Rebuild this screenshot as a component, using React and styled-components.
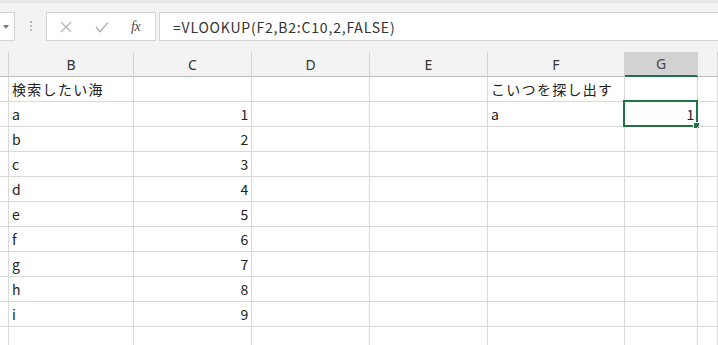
import React from 'react';
import styled, { createGlobalStyle } from 'styled-components';

const GlobalStyle = createGlobalStyle`
  html, body {
    margin: 0;
    padding: 0;
    background: #ffffff;
    overflow: hidden;
  }
  body {
    font-family: "Noto Sans CJK JP", "Noto Sans", sans-serif;
  }
`;

const Page = styled.div`
  width: 718px;
  height: 345px;
  overflow: hidden;
  background: #ffffff;
`;

const Toolbar = styled.div`
  height: 52px;
  box-sizing: border-box;
  background: #f3f3f3;
  border-top: 3px solid #e6e6e6;
  padding-top: 9px;
  display: flex;
  align-items: flex-start;
`;

const NameBox = styled.div`
  width: 15px;
  height: 29px;
  box-sizing: border-box;
  background: #ffffff;
  border: 1px solid #d4d4d4;
  border-left: none;
  display: flex;
  align-items: center;
  padding-left: 3px;
`;

const Arrow = styled.div`
  width: 0;
  height: 0;
  border-left: 3px solid transparent;
  border-right: 3px solid transparent;
  border-top: 4px solid #7a7a7a;
`;

const Grip = styled.div`
  margin: 9px 14px 0 15px;
  display: flex;
  flex-direction: column;
  gap: 2px;

  span {
    width: 2px;
    height: 2px;
    background: #b8b8b8;
  }
`;

const FxButtons = styled.div`
  width: 110px;
  height: 29px;
  box-sizing: border-box;
  background: #ffffff;
  border: 1px solid #d4d4d4;
  display: flex;
  align-items: center;
  padding-left: 13px;
  gap: 23px;
`;

const FxLabel = styled.span`
  font-family: "Liberation Serif", serif;
  font-style: italic;
  font-size: 14px;
  color: #4a4a4a;
  letter-spacing: -0.5px;
  margin-left: -1px;
`;

const FormulaBox = styled.div`
  flex: 1;
  margin-left: 3px;
  height: 29px;
  box-sizing: border-box;
  background: #ffffff;
  border: 1px solid #d4d4d4;
  border-right: none;
  padding-left: 13px;
  display: flex;
  align-items: center;
  font-size: 14px;
  letter-spacing: 0.8px;
  color: #333333;
`;

const Sheet = styled.div`
  display: grid;
  grid-template-columns: 9px 125px 118px 118px 118px 137px 73px 1fr;
  grid-auto-rows: 25px;
  font-size: 14px;
  color: #222222;
`;

const HeaderCell = styled.div`
  box-sizing: border-box;
  background: ${p => (p.$selected ? '#d2d2d2' : '#f3f3f3')};
  border-right: 1px solid #d4d4d4;
  border-bottom: ${p => (p.$selected ? '2px solid #217346' : '1px solid #bdbdbd')};
  display: flex;
  align-items: center;
  justify-content: center;
  color: ${p => (p.$selected ? '#4a4a4a' : '#333333')};
  font-family: "Noto Sans", sans-serif;
  font-size: 14px;
`;

const Cell = styled.div`
  position: relative;
  box-sizing: border-box;
  border-right: 1px solid #d9d9d9;
  border-bottom: 1px solid #d9d9d9;
  display: flex;
  align-items: center;
  justify-content: ${p => (p.$num ? 'flex-end' : 'flex-start')};
  padding: 0 1.5px 1px 3px;
  letter-spacing: 1.3px;
  white-space: nowrap;
  overflow: visible;
`;

const Selection = styled.div`
  position: absolute;
  top: -2px;
  left: -2px;
  right: -1px;
  bottom: -1px;
  border: 2px solid #217346;
  pointer-events: none;
`;

const Handle = styled.div`
  position: absolute;
  right: -4px;
  bottom: -4px;
  width: 5px;
  height: 5px;
  background: #217346;
  border: 1px solid #ffffff;
`;

const columns = ['', 'B', 'C', 'D', 'E', 'F', 'G', ''];

const rows = [
  ['', '検索したい海', '', '', '', 'こいつを探し出す', '', ''],
  ['', 'a', 1, '', '', 'a', 1, ''],
  ['', 'b', 2, '', '', '', '', ''],
  ['', 'c', 3, '', '', '', '', ''],
  ['', 'd', 4, '', '', '', '', ''],
  ['', 'e', 5, '', '', '', '', ''],
  ['', 'f', 6, '', '', '', '', ''],
  ['', 'g', 7, '', '', '', '', ''],
  ['', 'h', 8, '', '', '', '', ''],
  ['', 'i', 9, '', '', '', '', ''],
  ['', '', '', '', '', '', '', ''],
];

const Cross = () => (
  <svg width="12" height="12" viewBox="0 0 12 12">
    <path d="M1 1 L11 11 M11 1 L1 11" stroke="#b4b4b4" strokeWidth="1.3" fill="none" />
  </svg>
);

const Check = () => (
  <svg width="14" height="12" viewBox="0 0 14 12">
    <path d="M1 6 L5 10.5 L13 1.5" stroke="#b4b4b4" strokeWidth="1.5" fill="none" />
  </svg>
);

export default function App() {
  return (
    <Page>
      <GlobalStyle />
      <Toolbar>
        <NameBox>
          <Arrow />
        </NameBox>
        <Grip>
          <span />
          <span />
          <span />
        </Grip>
        <FxButtons>
          <Cross />
          <Check />
          <FxLabel>fx</FxLabel>
        </FxButtons>
        <FormulaBox>=VLOOKUP(F2,B2:C10,2,FALSE)</FormulaBox>
      </Toolbar>
      <Sheet>
        {columns.map((c, i) => (
          <HeaderCell key={i} $selected={c === 'G'}>
            {c}
          </HeaderCell>
        ))}
        {rows.map((r, ri) =>
          r.map((v, ci) => (
            <Cell key={ri + '-' + ci} $num={typeof v === 'number'}>
              {v}
              {ri === 1 && ci === 6 && (
                <Selection>
                  <Handle />
                </Selection>
              )}
            </Cell>
          ))
        )}
      </Sheet>
    </Page>
  );
}
